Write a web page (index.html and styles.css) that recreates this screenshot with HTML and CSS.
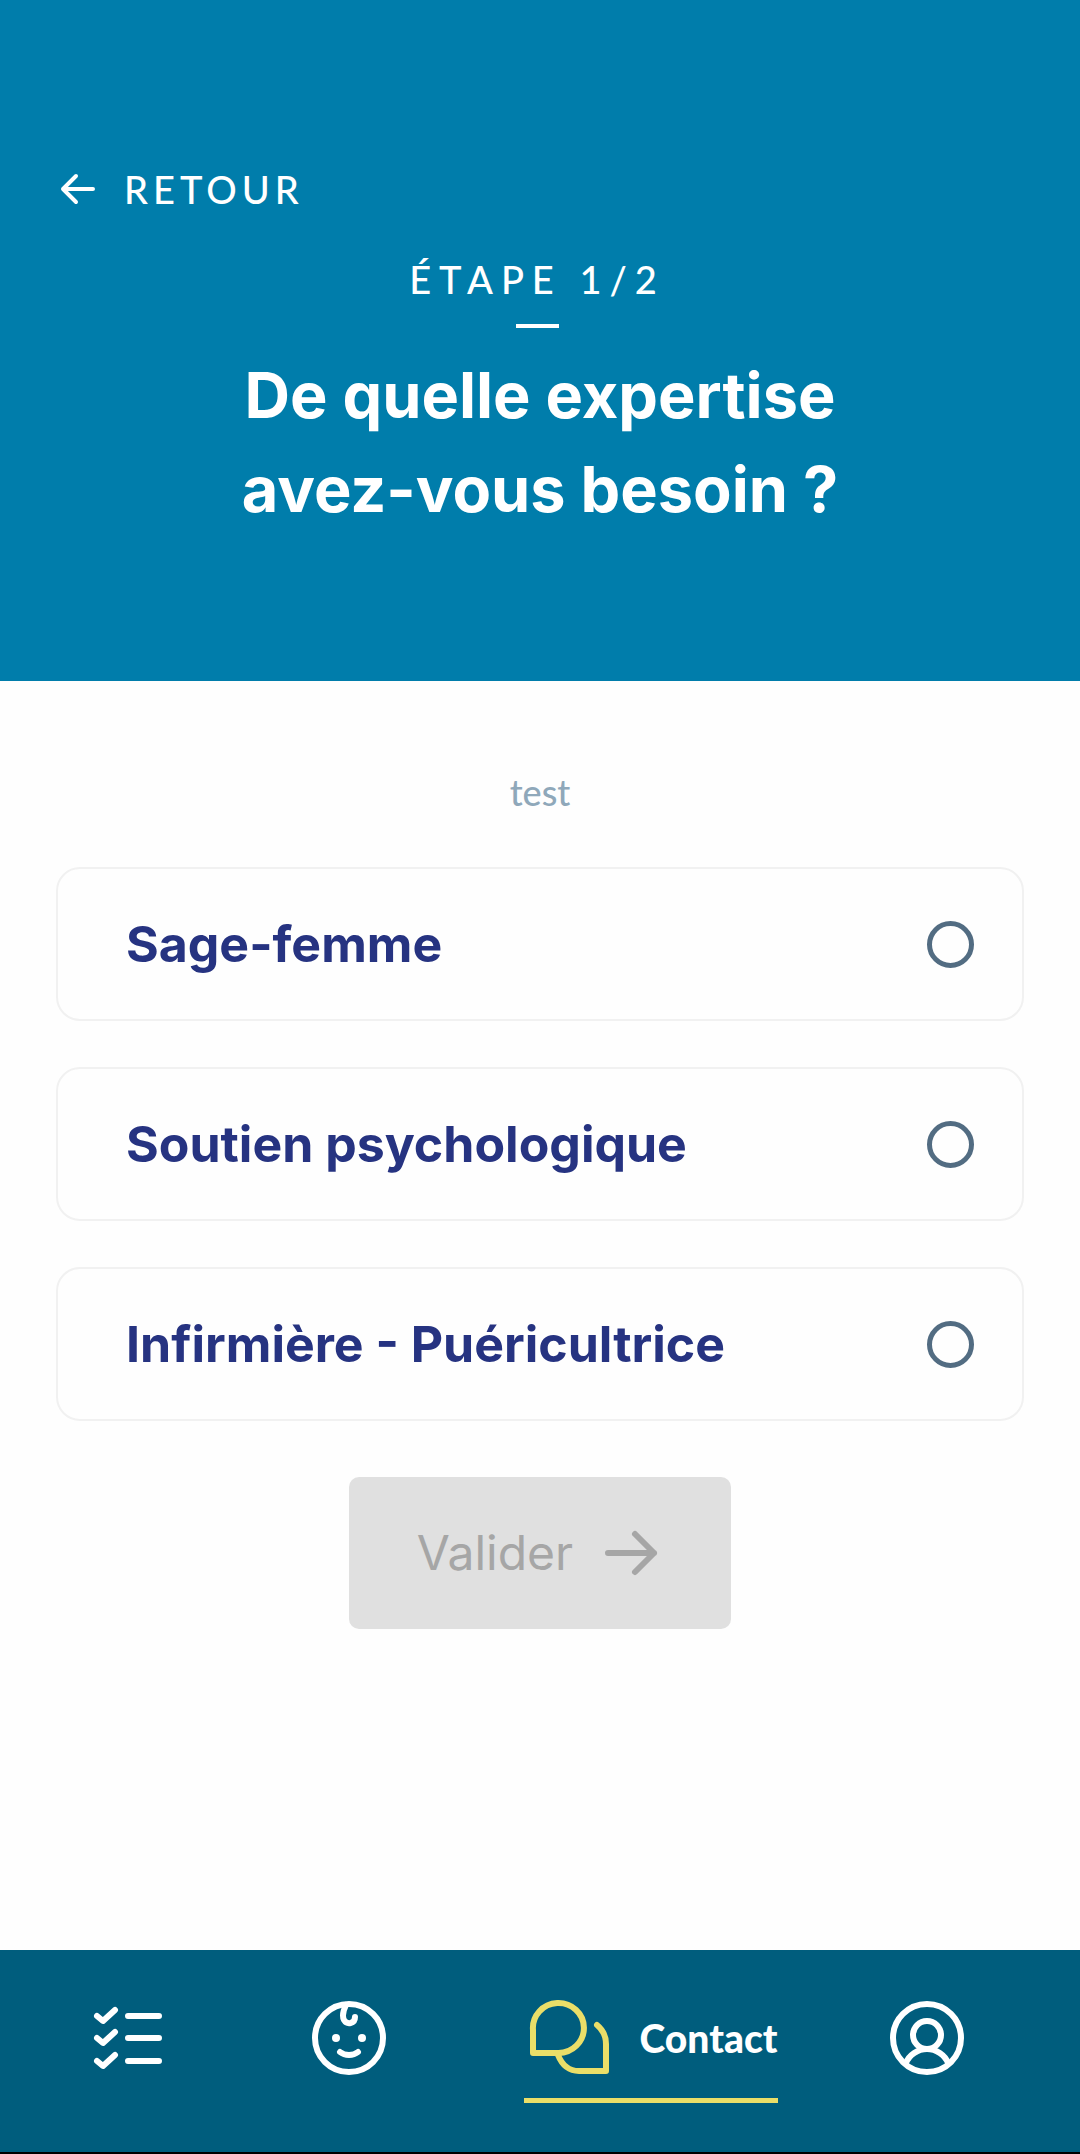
FILE: index.html
```html
<!DOCTYPE html>
<html lang="fr">
<head>
    <meta charset="utf-8">
    <title>De quelle expertise avez-vous besoin ?</title>
    <meta name="viewport" content="width=device-width, initial-scale=1">
    <link rel="stylesheet" href="styles.css">
</head>
<body>
    <header class="header">
        <a class="back" href="#">
            <svg class="back-icon" viewBox="0 0 36 32" aria-hidden="true">
                <path d="M16 3 L3 16 L16 29 M3 16 H33"/>
            </svg>
            <span>RETOUR</span>
        </a>
        <div class="progress">
            <p class="step">ÉTAPE 1/2</p>
            <hr class="divider">
        </div>
        <h1 class="title">De quelle expertise<br>avez-vous besoin ?</h1>
    </header>

    <main class="main">
        <p class="intro">test</p>
        <form class="form">
            <label class="option">
                <span>Sage-femme</span>
                <input class="radio" type="radio" name="expertise" value="sage-femme">
            </label>
            <label class="option">
                <span>Soutien psychologique</span>
                <input class="radio" type="radio" name="expertise" value="psychologique">
            </label>
            <label class="option">
                <span>Infirmière - Puéricultrice</span>
                <input class="radio" type="radio" name="expertise" value="puericultrice">
            </label>
            <button class="submit" type="submit" disabled>
                <span>Valider</span>
                <svg class="submit-icon" viewBox="0 0 52 46" aria-hidden="true">
                    <path d="M3 23 H49 M30 4 L49 23 L30 42"/>
                </svg>
            </button>
        </form>
    </main>

    <nav class="nav">
        <a class="nav-item" href="#" aria-label="Liste">
            <svg class="nav-icon" viewBox="0 0 80 80" aria-hidden="true">
                <path d="M9 18 L15 23 L27 12 M9 40 L15 45 L27 34 M9 63 L15 68 L27 57 M40 18 H71 M40 40 H71 M40 63 H71"/>
            </svg>
        </a>
        <a class="nav-item" href="#" aria-label="Bébé">
            <svg class="nav-icon" viewBox="0 0 80 80" aria-hidden="true">
                <circle cx="40" cy="40" r="34"/>
                <path d="M37 7 C34 13 33 18 35 22 C38 27 46 26 46 19 M31 54 C36 58 44 58 49 54"/>
                <circle class="dot" cx="27" cy="40" r="4"/>
                <circle class="dot" cx="53" cy="40" r="4"/>
            </svg>
        </a>
        <a class="nav-item active" href="#">
            <svg class="nav-icon" viewBox="0 0 80 80" aria-hidden="true">
                <path d="M9 55 V32 A25.5 25 0 1 1 34 55 Z M34 57 C38 67 45 73 55 73 H82 V46 C82 38 79 32 73 27"/>
            </svg>
            <span>Contact</span>
        </a>
        <a class="nav-item" href="#" aria-label="Profil">
            <svg class="nav-icon" viewBox="0 0 80 80" aria-hidden="true">
                <circle cx="40" cy="40" r="34"/>
                <circle cx="40" cy="37" r="14"/>
                <path d="M19 65 C22 57 31 51 40 51 C49 51 58 57 61 65"/>
            </svg>
        </a>
    </nav>
</body>
</html>
```
FILE: styles.css
```css
* {
    box-sizing: border-box;
}

body {
    display: flex;
    flex-direction: column;
    min-height: 100vh;
    margin: 0;
    background-color: #fefefe;
    font-family: Inter, "Liberation Sans", sans-serif;
}

svg {
    flex: none;
    fill: none;
    stroke: currentColor;
    stroke-width: 6;
    stroke-linecap: round;
    stroke-linejoin: round;
    overflow: visible;
}

.header {
    padding: 164px 56px 145px;
    background-color: #007dab;
    color: white;
    text-align: center;
}

.back {
    display: flex;
    align-items: center;
    gap: 28px;
    padding-left: 4px;
    color: white;
    font-family: Lato, sans-serif;
    font-size: 38px;
    font-weight: 500;
    line-height: 50px;
    letter-spacing: 5px;
    text-decoration: none;
}

.back-icon {
    width: 36px;
    stroke-width: 4;
}

.progress {
    padding-right: 6px;
}

.step {
    margin: 40px 0 20px;
    font-family: Lato, sans-serif;
    font-size: 38px;
    font-weight: 500;
    line-height: 50px;
    letter-spacing: 8px;
}

.divider {
    width: 43px;
    height: 4px;
    margin: 0 auto 20px;
    border: 0;
    background-color: white;
}

.title {
    margin: 0;
    font-size: 63px;
    font-weight: 700;
    line-height: 94px;
}

.main {
    flex: 1;
    padding: 86px 56px;
}

.intro {
    margin: 0 0 50px;
    color: #8fa8ba;
    font-family: Lato, sans-serif;
    font-size: 36px;
    font-weight: 500;
    line-height: 50px;
    text-align: center;
}

.form {
    display: flex;
    flex-direction: column;
    gap: 46px;
}

.option {
    display: flex;
    align-items: center;
    justify-content: space-between;
    padding: 45px 48px 45px 68px;
    border: 2px solid #f1f1f1;
    border-radius: 24px;
    color: #263381;
    font-size: 50px;
    font-weight: 700;
    line-height: 60px;
}

.radio {
    appearance: none;
    width: 47px;
    height: 47px;
    margin: 0;
    border: 5px solid #526c82;
    border-radius: 50%;
}

.radio:checked {
    background-color: #263381;
}

.submit {
    display: flex;
    align-items: center;
    align-self: center;
    gap: 32px;
    margin-top: 10px;
    padding: 46px 74px 46px 68px;
    border: 0;
    border-radius: 10px;
    background-color: #e0e0e0;
    color: #a6a6a6;
    font-family: inherit;
    font-size: 48px;
    line-height: 60px;
}

.submit-icon {
    width: 52px;
}

.nav {
    display: grid;
    grid-template-columns: 22fr 22fr 38fr 17fr;
    justify-items: center;
    padding: 48px 68px 49px 18px;
    border-bottom: 2px solid black;
    background-color: #005d7d;
}

.nav-item {
    display: flex;
    align-items: center;
    gap: 36px;
    padding-bottom: 20px;
    border-bottom: 5px solid transparent;
    color: white;
    font-family: Lato, sans-serif;
    font-size: 39px;
    font-weight: 900;
    text-decoration: none;
}

.nav-item.active {
    border-color: #eade68;
}

.nav-icon {
    width: 80px;
    height: 80px;
}

.active .nav-icon {
    color: #eade68;
}

.dot {
    fill: currentColor;
    stroke: none;
}
```
